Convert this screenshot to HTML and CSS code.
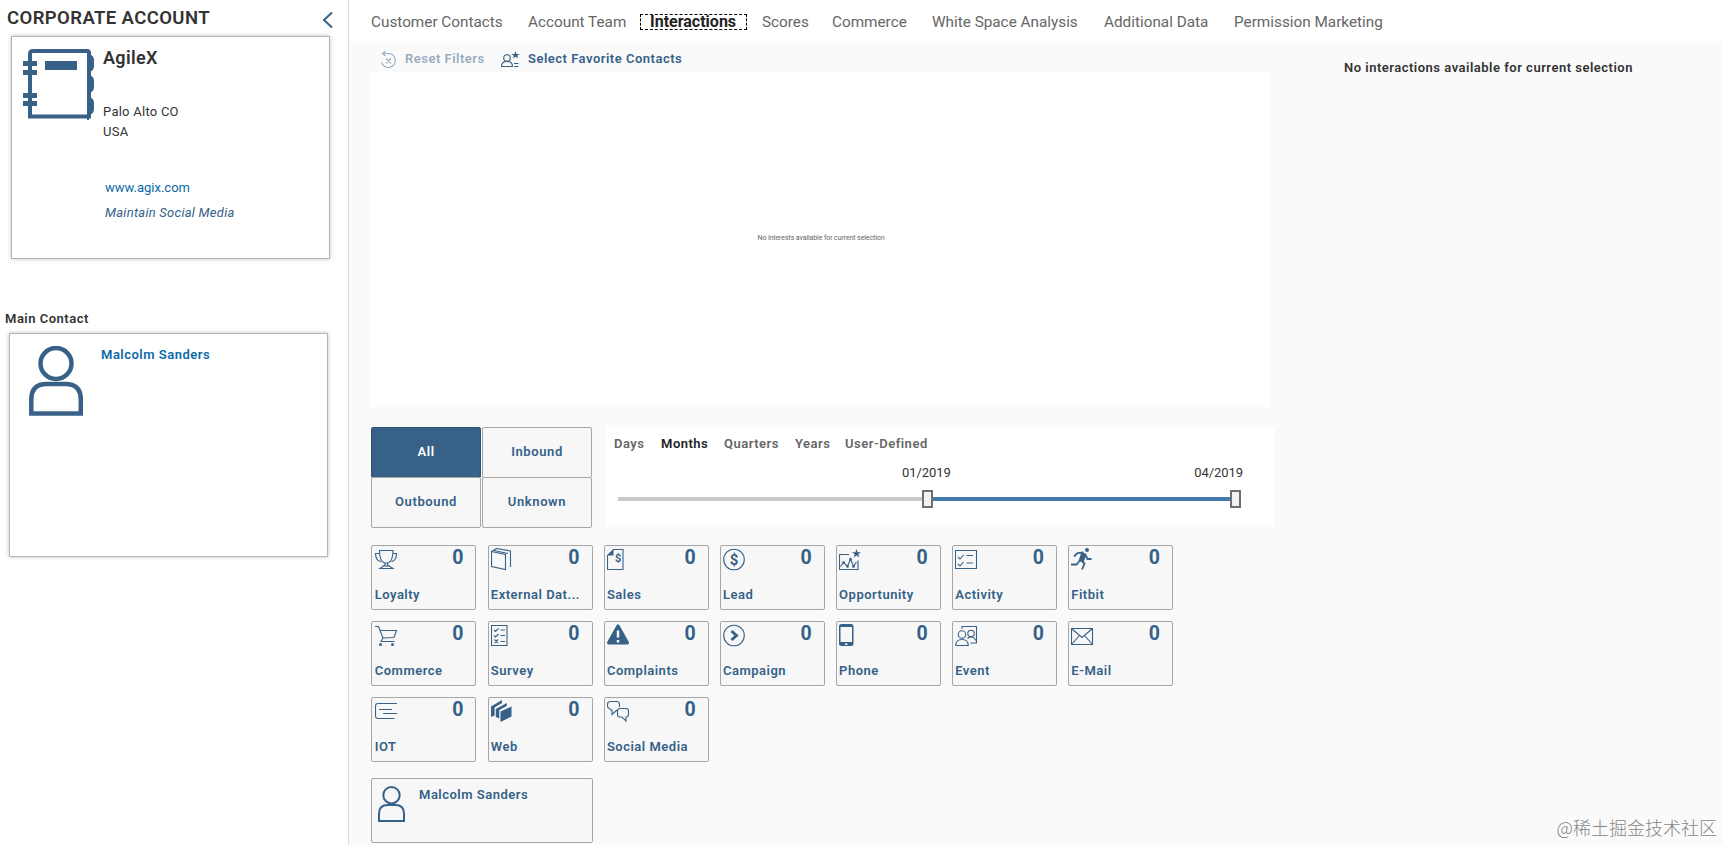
FILE: index.html
```html
<!DOCTYPE html>
<html lang="en">
<head>
    <meta charset="utf-8">
    <title>Corporate Account</title>
    <link rel="stylesheet" href="styles.css">
</head>
<body>
    <aside class="sidebar">
        <div class="sidebar-head">
            <h1>CORPORATE ACCOUNT</h1>
            <svg class="collapse" width="12" height="18" viewBox="0 0 12 18"><path d="M10 1.500L2 9l8 7.500"/></svg>
        </div>
        <div class="card account">
            <svg class="notebook" width="72" height="72" viewBox="0 0 72 72">
                <path d="M7 68.500V6q0-3 3-3h54q2 0 2 2v63.500z" fill="none" stroke="#386187" stroke-width="4"/>
                <path d="M64 5q7 2 7 7v6q0 5-5 6v3q5 1 5 6v6q0 5-5 6v4q5 1 5 6v6q0 5-5 6v7h-2z"/>
                <path d="M0 13h14v5H0zM0 22h14v5H0zM0 45h14v5H0zM0 53h14v5H0zM22 13h32v9H22z"/>
            </svg>
            <div class="account-info">
                <h2>AgileX</h2>
                <p>Palo Alto CO</p>
                <p>USA</p>
                <a class="web" href="#">www.agix.com</a>
                <a class="social" href="#">Maintain Social Media</a>
            </div>
        </div>
        <h3>Main Contact</h3>
        <div class="card contact">
            <svg class="person" width="54" height="71" viewBox="0 0 54 71"><circle cx="27" cy="17.500" r="15.500"/><path d="M2.300 67.500V53.500q0-15.500 15.500-15.500h18.500q15.500 0 15.500 15.500v14z"/></svg>
            <a class="name" href="#">Malcolm Sanders</a>
        </div>
    </aside>

    <main class="main">
        <nav class="tabs">
            <a>Customer Contacts</a>
            <a>Account Team</a>
            <a class="selected">Interactions</a>
            <a>Scores</a>
            <a>Commerce</a>
            <a>White Space Analysis</a>
            <a>Additional Data</a>
            <a>Permission Marketing</a>
        </nav>
        <div class="columns">
            <section class="left">
                <div class="toolbar">
                    <span class="tool disabled">
                        <svg class="line" width="18" height="20" viewBox="0 0 18 20"><path d="M3.500 4.500h5A7 7 0 1 1 1.500 13M5.500 2l-3 2.500 3 2.500M6 9.500l5 5M11 9.500l-5 5"/></svg>
                        <b>Reset Filters</b>
                    </span>
                    <span class="tool favorite">
                        <svg class="line" width="20" height="20" viewBox="0 0 20 20"><circle cx="6" cy="9" r="3.300"/><path d="M.5 17.500q0-5 5.500-5t5.500 5zM13 14.500h4.500M13 17.500h4.500"/><path class="solid" d="M14.500 2l1 2.900h3.200l-2.500 1.800.9 2.900-2.600-1.800-2.600 1.800.9-2.900-2.500-1.800h3.200z"/></svg>
                        <b>Select Favorite Contacts</b>
                    </span>
                </div>
                <div class="interests">No interests available for current selection</div>

                <div class="filters">
                    <div class="direction">
                        <button class="on">All</button>
                        <button>Inbound</button>
                        <button>Outbound</button>
                        <button>Unknown</button>
                    </div>
                    <div class="period">
                        <div class="units">
                            <b>Days</b>
                            <b class="on">Months</b>
                            <b>Quarters</b>
                            <b>Years</b>
                            <b>User-Defined</b>
                        </div>
                        <div class="dates"><span>01/2019</span><span>04/2019</span></div>
                        <div class="slider"><i class="rest"></i><i class="handle"></i><i class="range"></i><i class="handle"></i></div>
                    </div>
                </div>

                <div class="tiles">
                    <div class="tile">
                        <svg class="line" viewBox="0 0 24 24"><path d="M4.500 2.500h13.500c0 7-1 11-5 12.500h-3.500c-4-1.500-5-5.500-5-12.500zM4.500 5.500h-4c0 5 2 7.500 5.500 8M18 5.500h3.500c0 5-2 7.500-5 8M10 15v2l-5 3.500h13L12.500 17v-2M7.500 18h7.500"/></svg>
                        <em>0</em><b>Loyalty</b>
                    </div>
                    <div class="tile">
                        <svg class="line" viewBox="0 0 24 24"><path d="M.5 3.500l14 3v15l-14-3zM.5 3.500l5-3 14 2.500v16M3 2.500l14 3"/></svg>
                        <em>0</em><b>External Dat...</b>
                    </div>
                    <div class="tile">
                        <svg class="line" viewBox="0 0 24 24"><path d="M6.500 1.500h9.500v20H.5v-14z"/><path class="solid" d="M6.500 1.500v6h-6z"/><text x="8" y="14" font-size="11">$</text></svg>
                        <em>0</em><b>Sales</b>
                    </div>
                    <div class="tile">
                        <svg class="line" viewBox="0 0 24 24"><circle cx="11" cy="11.500" r="10.300"/><text x="6.800" y="16.800" font-size="15">$</text></svg>
                        <em>0</em><b>Lead</b>
                    </div>
                    <div class="tile">
                        <svg class="line" viewBox="0 0 24 24"><path d="M10 6.500H.5v15h18.500v-9M1.500 18.500l3-4 4 4L11.500 11l3 7.500 3-4.500"/><path class="solid" d="M17.500 1l1.100 3.200H22l-2.700 2.100 1 3.300-2.800-2-2.800 2 1-3.300L13 4.200h3.400z"/><g class="solid"><circle cx="4.500" cy="14.500" r="1.300"/><circle cx="8.500" cy="18.500" r="1.300"/><circle cx="11.500" cy="11" r="1.300"/><circle cx="14.500" cy="18.500" r="1.300"/></g></svg>
                        <em>0</em><b>Opportunity</b>
                    </div>
                    <div class="tile">
                        <svg class="line" viewBox="0 0 24 24"><path d="M.5 2.500h21v18H.5zM3 9l2 2 3.500-4M3 16l2 2 3.500-4M11.500 7.500H18M11.500 15H18"/></svg>
                        <em>0</em><b>Activity</b>
                    </div>
                    <div class="tile">
                        <svg class="line" viewBox="0 0 24 24"><circle class="solid" cx="16" cy="2" r="2"/><path class="thick" d="M3 8.500L6.500 5l6-.5M14.500 7l2 4h4M0 16.500h5.500l3-3.500M10.500 12.500l3 3-2.500 6"/><path class="solid" d="M10.500 4l5 2-3 8.500-5-1.500z"/></svg>
                        <em>0</em><b>Fitbit</b>
                    </div>
                    <div class="tile">
                        <svg class="line" viewBox="0 0 24 24"><path d="M0 2.500h3.500L8 14l-2 3.500h13.500M5 6.500h16.500l-2.500 7L8 14"/><g class="solid"><circle cx="5.500" cy="20.500" r="1.500"/><circle cx="17.500" cy="20.500" r="1.500"/></g></svg>
                        <em>0</em><b>Commerce</b>
                    </div>
                    <div class="tile">
                        <svg class="line" viewBox="0 0 24 24"><path d="M.5 1.500h15.500v20H.5zM3 6l1.500 1.500L7.500 4.500M3 11.500L4.500 13l3-3M3.500 15.500l3.500 3.500M7 15.500L3.500 19M9.500 6H14M9.500 11.500H14M9.500 17.500H14"/></svg>
                        <em>0</em><b>Survey</b>
                    </div>
                    <div class="tile">
                        <svg class="line" viewBox="0 0 24 24"><path class="solid" d="M9.500 1.500q1.500-2.500 3 0l9.300 16.500q.7 2.500-1.500 2.500H1.700q-2.200 0-1.500-2.500z"/><path class="mark" d="M11 6.500v7M11 16v2.500"/></svg>
                        <em>0</em><b>Complaints</b>
                    </div>
                    <div class="tile">
                        <svg class="line" viewBox="0 0 24 24"><circle cx="11" cy="11.500" r="10.300"/><path stroke-width="3" d="M8.500 7l5 4.500-5 4.500"/></svg>
                        <em>0</em><b>Campaign</b>
                    </div>
                    <div class="tile">
                        <svg class="line" viewBox="0 0 24 24"><path class="solid" fill-rule="evenodd" d="M2.500 0h9.500q2.500 0 2.500 2.500v17q0 2.500-2.500 2.500H2.500Q0 22 0 19.500v-17Q0 0 2.500 0zM1.500 3v15h11.500V3zM6 19.500v1.500h2.500v-1.500z"/></svg>
                        <em>0</em><b>Phone</b>
                    </div>
                    <div class="tile">
                        <svg class="line" viewBox="0 0 24 24"><path d="M7 5V2.500h14.500v16.500h-6"/><circle cx="7" cy="10.500" r="3.700"/><path d="M.8 21.500q0-6 6.200-6t6.200 6z"/><circle cx="16" cy="9.500" r="3.200"/><path d="M12.500 14.500q5-4 8.500 2"/></svg>
                        <em>0</em><b>Event</b>
                    </div>
                    <div class="tile">
                        <svg class="line" viewBox="0 0 24 24"><path d="M.5 4.500h21v16H.5zM.5 4.500L11 13.500l10.500-9M.5 20.500l8-9M21.500 20.500l-8-9"/></svg>
                        <em>0</em><b>E-Mail</b>
                    </div>
                    <div class="tile">
                        <svg class="line" viewBox="0 0 24 24"><path d="M22 3.500H3Q.5 3.500.5 6v10q0 2.500 2.500 2.500h16.500M4 9.500h13M8 13.500h14"/></svg>
                        <em>0</em><b>IOT</b>
                    </div>
                    <div class="tile">
                        <svg class="line" viewBox="0 0 24 24"><g class="solid"><path d="M9.500 11.500l11-5v10l-11 5.500z"/><path d="M4.800 9l11-6v3L8.300 10v8.500L4.800 17z"/><path d="M0 6.500L11 0v3L3.600 7.500v8L0 17z"/></g></svg>
                        <em>0</em><b>Web</b>
                    </div>
                    <div class="tile">
                        <svg class="line" viewBox="0 0 24 24"><path d="M10 10l-5 4.500V10H4L.5 7V4.500q0-3 3-3h6q3 0 3 3V7M13 8.500h6q2.500 0 2.500 2.500v3.500q0 2.500-2.500 2.500v4L15 17h-2q-2.500 0-2.500-2.500V11q0-2.500 2.500-2.500z"/></svg>
                        <em>0</em><b>Social Media</b>
                    </div>
                </div>

                <div class="contact-tile">
                    <svg class="person" width="27" height="36" viewBox="0 0 27 36"><circle cx="13.500" cy="9.200" r="8.200"/><path d="M1 35V27.500q0-8.500 8.500-8.500h8q8.500 0 8.500 8.500V35z"/></svg>
                    <b>Malcolm Sanders</b>
                </div>
            </section>
            <section class="right">No interactions available for current selection</section>
        </div>
    </main>
    <div class="watermark">@稀土掘金技术社区</div>
</body>
</html>
```

FILE: styles.css
```css
* { box-sizing: border-box; }
body { margin: 0; display: flex; height: 845px; overflow: hidden; background: #fafafa; color: #333; font: 13px/20px Roboto, "Noto Sans", sans-serif; letter-spacing: .25px; }
h1, h2, h3, p { margin: 0; font-weight: 600; }
a { text-decoration: none; color: #0a6aa8; }
b { font-weight: 600; letter-spacing: .5px; }
svg { display: block; flex: none; fill: #386187; }

/* sidebar */
.sidebar { width: 349px; flex: none; background: #fff; border-right: 1px solid #d9d9d9; }
.sidebar-head { display: flex; justify-content: space-between; height: 36px; padding: 7px 14px 0 7px; }
h1 { font-size: 18.5px; line-height: 22px; letter-spacing: .4px; }
.collapse { margin-top: 4px; fill: none; stroke: #386187; stroke-width: 2; }
.card { display: flex; width: 319px; height: 223px; background: #fff; border: 1px solid #b5b5b5; box-shadow: 0 0 4px rgba(0,0,0,.25); }
.account { margin-left: 11px; padding: 11px 0 0 11px; }
.account-info { margin-top: -1px; padding: 0 0 0 8px; }
h2 { font-size: 18px; line-height: 22px; letter-spacing: .35px; margin-bottom: 33px; }
.account-info p { font-weight: 400; }
.account-info a { display: block; padding-left: 2px; }
.account-info .web { margin-top: 36px; letter-spacing: 0; }
.account-info .social { margin-top: 5px; font-style: italic; color: #346187; }
h3 { font-size: 13px; letter-spacing: .5px; margin: 50px 0 4px 5px; }
.contact { margin-left: 9px; padding: 12px 0 0 19px; height: 224px; }
.person { fill: none; stroke: #386187; stroke-width: 4.5; }
.name { margin: -1px 0 0 18px; font-weight: 600; letter-spacing: .5px; }

/* tabs */
.main { flex: 1; }
.tabs { display: grid; grid-template-columns: 157px 112px 122px 70px 100px 172px 130px 150px; height: 41px; padding: 12px 0 0 22px; background: #fff; font-size: 15.3px; line-height: 20px; letter-spacing: 0; white-space: nowrap; }
.tabs a { color: #666; }
.tabs .selected { width: 107px; height: 16px; margin: 2px 0 0; padding-left: 9px; line-height: 14px; font-size: 16px; font-weight: 700; color: #222; border: 1px dashed #000; }

.columns { display: flex; padding-left: 22px; }
.left { width: 904px; }
.right { padding: 17px 0 0 69px; font-weight: 600; letter-spacing: .5px; }
.toolbar { display: flex; height: 31px; padding: 8px 0 0 9px; }
.tool { display: flex; color: #386187; }
.disabled { opacity: .5; width: 121px; gap: 7px; }
.favorite { gap: 7px; }
.line { fill: none; stroke: #386187; stroke-width: 1.1; }
.line .solid { fill: #386187; stroke: none; }
.line .thick { stroke-width: 1.8; }
.line .mark { stroke: #f7f7f7; stroke-width: 2.5; }
.line text { fill: #386187; stroke: none; font-weight: 700; letter-spacing: 0; }
.interests { width: 900px; height: 335px; background: #fff; text-align: center; font-size: 7px; line-height: 332px; letter-spacing: -.1px; color: #666; }

/* direction + period */
.filters { display: flex; gap: 14px; margin-top: 20px; }
.direction { display: grid; grid-template-columns: 110px 110px; grid-template-rows: 51px 51px; column-gap: 1px; width: 221px; height: 101px; }
.direction button { height: 51px; padding: 0 0 2px; border: 1px solid #a6a6a6; border-radius: 2px; background: #f7f7f7; color: #346187; font: 600 13px Roboto, sans-serif; letter-spacing: .6px; }
.direction button:nth-child(n+3) { margin-top: -1px; }
.direction .on { background: #386187; border-color: #2b5475; color: #fff; }
.period { width: 669px; height: 100px; background: #fff; }
.units { display: grid; grid-template-columns: 47px 63px 71px 50px 90px; padding: 7px 0 0 8px; color: #666; }
.units .on { color: #222; }
.dates { display: flex; justify-content: space-between; width: 341px; margin: 9px 0 0 296px; letter-spacing: -.05px; }
.slider { display: flex; align-items: center; height: 18px; margin: 7px 0 0 12px; }
.rest { width: 304px; height: 4px; background: #cacaca; }
.range { width: 297px; height: 4px; background: #427cac; }
.handle { width: 11px; height: 18px; border: 2px solid #6f6f6f; background: #f2f2f2; }

/* tiles */
.tiles { display: grid; grid-template-columns: repeat(7, 105px); column-gap: 11.1px; row-gap: 11px; margin: 17px 0 0 .45px; }
.tile { display: grid; grid-template-columns: 24px 1fr; grid-template-rows: 35px 20px; height: 65px; padding: 2px 12px 0 2.3px; border: 1px solid #a6a6a6; border-radius: 2px; background: #f7f7f7; color: #346187; }
.tile svg { width: 24px; height: 24px; }
.tile em { margin-top: -2px; font: 700 19.5px/24px Roboto, sans-serif; letter-spacing: 0; text-align: right; }
.tile b { grid-column: 1 / 3; white-space: nowrap; margin-top: 2px; }
.contact-tile { display: flex; width: 222px; height: 65px; margin-top: 16px; padding: 7px 0 0 6px; border: 1px solid #a6a6a6; border-radius: 2px; background: #f7f7f7; color: #346187; }
.contact-tile .person { stroke-width: 2; }
.contact-tile b { margin-left: 14px; line-height: 18px; }

.watermark { position: absolute; right: 6px; bottom: 5px; font: 300 18px/26px "Noto Sans CJK SC", sans-serif; letter-spacing: 0; color: #858585; text-shadow: 0 0 2px #fff; }
```
